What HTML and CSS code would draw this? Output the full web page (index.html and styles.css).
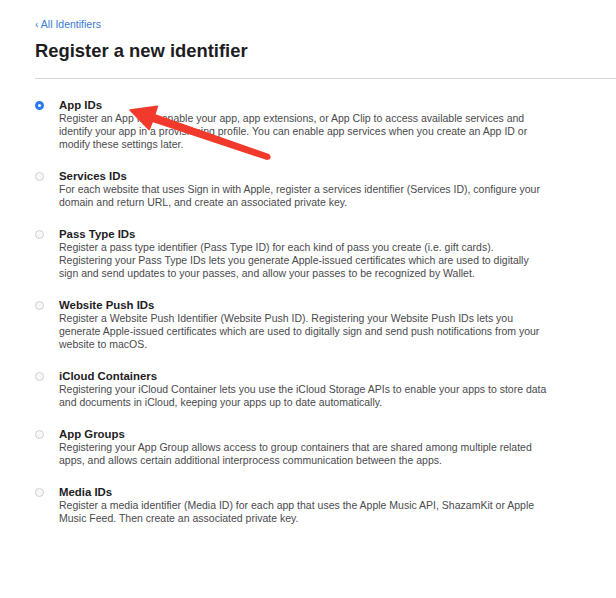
FILE: index.html
```html
<!DOCTYPE html>
<html lang="en">
<head>
<meta charset="utf-8">
<title>Register a new identifier</title>
<link rel="stylesheet" href="styles.css">
</head>
<body>
<div class="page">
  <a class="back" href="#">‹ All Identifiers</a>
  <h1 class="title">Register a new identifier</h1>
  <hr class="divider">
  <ul class="options">
    <li class="option">
      <span class="radio selected"></span>
      <div class="text">
        <div class="name">App IDs</div>
        <p class="desc">Register an App ID to enable your app, app extensions, or App Clip to access available services and identify your app in a provisioning profile. You can enable app services when you create an App ID or modify these settings later.</p>
      </div>
    </li>
    <li class="option">
      <span class="radio"></span>
      <div class="text">
        <div class="name">Services IDs</div>
        <p class="desc">For each website that uses Sign in with Apple, register a services identifier (Services ID), configure your domain and return URL, and create an associated private key.</p>
      </div>
    </li>
    <li class="option">
      <span class="radio"></span>
      <div class="text">
        <div class="name">Pass Type IDs</div>
        <p class="desc">Register a pass type identifier (Pass Type ID) for each kind of pass you create (i.e. gift cards). Registering your Pass Type IDs lets you generate Apple-issued certificates which are used to digitally sign and send updates to your passes, and allow your passes to be recognized by Wallet.</p>
      </div>
    </li>
    <li class="option">
      <span class="radio"></span>
      <div class="text">
        <div class="name">Website Push IDs</div>
        <p class="desc">Register a Website Push Identifier (Website Push ID). Registering your Website Push IDs lets you generate Apple-issued certificates which are used to digitally sign and send push notifications from your website to macOS.</p>
      </div>
    </li>
    <li class="option">
      <span class="radio"></span>
      <div class="text">
        <div class="name">iCloud Containers</div>
        <p class="desc">Registering your iCloud Container lets you use the iCloud Storage APIs to enable your apps to store data and documents in iCloud, keeping your apps up to date automatically.</p>
      </div>
    </li>
    <li class="option">
      <span class="radio"></span>
      <div class="text">
        <div class="name">App Groups</div>
        <p class="desc">Registering your App Group allows access to group containers that are shared among multiple related apps, and allows certain additional interprocess communication between the apps.</p>
      </div>
    </li>
    <li class="option">
      <span class="radio"></span>
      <div class="text">
        <div class="name">Media IDs</div>
        <p class="desc">Register a media identifier (Media ID) for each app that uses the Apple Music API, ShazamKit or Apple Music Feed. Then create an associated private key.</p>
      </div>
    </li>
  </ul>
</div>
<svg class="arrow" width="616" height="598" viewBox="0 0 616 598" aria-hidden="true">
  <polygon points="130,110 157.5,106.2 154.7,114.7 268.8,154.6 267.2,159.4 152.5,121.3 149.2,129.8" fill="#f23a2c" stroke="#f23a2c" stroke-width="1.4" stroke-linejoin="round"/>
  <circle cx="268" cy="157" r="2.6" fill="#f23a2c"/>
</svg>
</body>
</html>
```
FILE: styles.css
```css
html, body {
  margin: 0;
  padding: 0;
  background: #ffffff;
}
body {
  font-family: "Liberation Sans", Arial, "Helvetica Neue", sans-serif;
  color: #1d1d1f;
  overflow: hidden;
}
.page {
  padding: 17px 0 0 35px;
}
.back {
  display: block;
  font-size: 10.5px;
  line-height: 14px;
  color: #3a7bd0;
  text-decoration: none;
}
.title {
  margin: 8px 0 0 0;
  font-size: 18.4px;
  line-height: 24px;
  font-weight: bold;
  color: #1d1d1f;
}
.divider {
  margin: 15px 0 0 0;
  border: 0;
  border-top: 1px solid #d6d6d6;
  height: 0;
}
.options {
  list-style: none;
  margin: 19px 0 0 0;
  padding: 0;
  display: flex;
  flex-direction: column;
  gap: 18px;
}
.option {
  display: flex;
  align-items: flex-start;
  gap: 15px;
}
.radio {
  flex: none;
  box-sizing: border-box;
  width: 9px;
  height: 9px;
  margin-top: 3px;
  border-radius: 50%;
  border: 1px solid #d0d0d0;
  background: #f7f7f7;
}
.radio.selected {
  border: 3px solid #2a7bf0;
  background: #ffffff;
}
.text {
  width: 488px;
}
.name {
  font-size: 11.4px;
  line-height: 14px;
  font-weight: bold;
  color: #1d1d1f;
}
.desc {
  margin: 0;
  font-size: 10.5px;
  line-height: 13px;
  color: #4a4a4d;
}
.arrow {
  position: absolute;
  left: 0;
  top: 0;
  pointer-events: none;
}
```
